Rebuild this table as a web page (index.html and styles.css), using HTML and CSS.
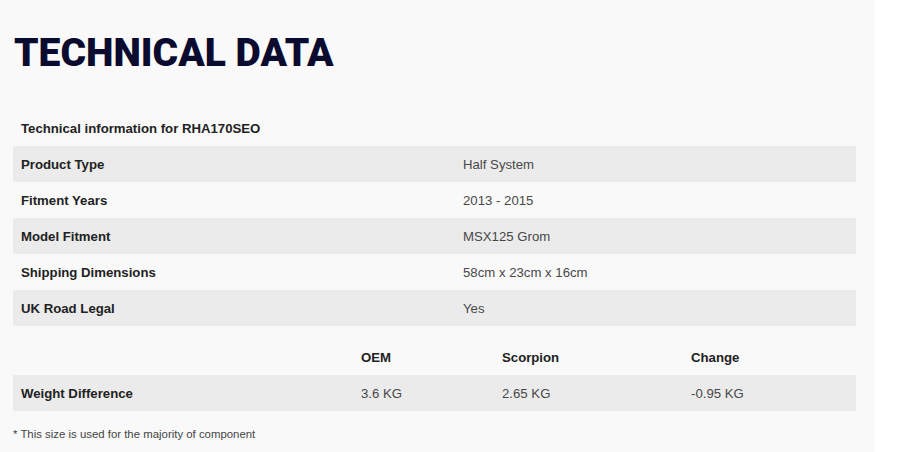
FILE: index.html
```html
<!DOCTYPE html>
<html>
<head>
<meta charset="utf-8">
<link rel="stylesheet" href="styles.css">
</head>
<body>
<div class="panel">
  <h1 class="title">TECHNICAL DATA</h1>
  <table class="spec">
    <colgroup><col class="c-label"><col class="c-value"></colgroup>
    <tr class="caption-row"><th colspan="2">Technical information for RHA170SEO</th></tr>
    <tr class="shaded"><th>Product Type</th><td>Half System</td></tr>
    <tr><th>Fitment Years</th><td>2013 - 2015</td></tr>
    <tr class="shaded"><th>Model Fitment</th><td>MSX125 Grom</td></tr>
    <tr><th>Shipping Dimensions</th><td>58cm x 23cm x 16cm</td></tr>
    <tr class="shaded"><th>UK Road Legal</th><td>Yes</td></tr>
  </table>
  <table class="weight">
    <colgroup><col class="w1"><col class="w2"><col class="w3"><col class="w4"></colgroup>
    <tr><th></th><th>OEM</th><th>Scorpion</th><th>Change</th></tr>
    <tr class="shaded"><th>Weight Difference</th><td>3.6 KG</td><td>2.65 KG</td><td>-0.95 KG</td></tr>
  </table>
  <p class="note">* This size is used for the majority of component</p>
</div>
</body>
</html>
```
FILE: styles.css
```css
html, body {
  margin: 0;
  padding: 0;
  background: #ffffff;
}
.panel {
  width: 875px;
  min-height: 452px;
  box-sizing: border-box;
  background: #f9f9f9;
  padding: 34px 19px 0 13px;
  font-family: "Liberation Sans", Arial, sans-serif;
  font-size: 13.2px;
  color: #222;
}
.title {
  margin: 0 0 0 1px;
  font-family: Roboto, sans-serif;
  font-weight: 900;
  font-size: 39px;
  line-height: 38px;
  letter-spacing: 0;
  color: #0b0b30;
}
table {
  width: 843px;
  border-collapse: collapse;
  table-layout: fixed;
}
th, td {
  height: 36px;
  padding: 0 8px;
  text-align: left;
  vertical-align: middle;
  box-sizing: border-box;
}
th {
  font-weight: bold;
  color: #222;
}
td {
  font-weight: normal;
  color: #484848;
}
.spec {
  margin-top: 38px;
}
.c-label { width: 442px; }
.c-value { width: 401px; }
.shaded {
  background: #ebebeb;
}
.weight {
  margin-top: 13px;
}
.w1 { width: 340px; }
.w2 { width: 141px; }
.w3 { width: 189px; }
.w4 { width: 173px; }
.note {
  margin: 17px 0 0 0;
  font-size: 11.4px;
  color: #444;
}
```
